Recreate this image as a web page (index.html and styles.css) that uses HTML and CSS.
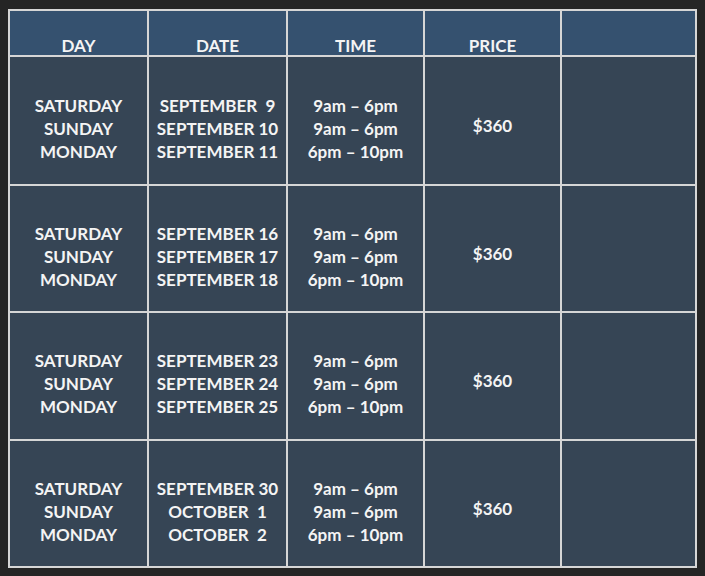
FILE: index.html
```html
<!DOCTYPE html>
<html>
<head>
<meta charset="utf-8">
<link rel="stylesheet" href="styles.css">
</head>
<body>
<div class="schedule">
  <div class="cell head">DAY</div>
  <div class="cell head">DATE</div>
  <div class="cell head">TIME</div>
  <div class="cell head">PRICE</div>
  <div class="cell head"></div>

  <div class="cell body"><span>SATURDAY</span><span>SUNDAY</span><span>MONDAY</span></div>
  <div class="cell body"><span>SEPTEMBER  9</span><span>SEPTEMBER 10</span><span>SEPTEMBER 11</span></div>
  <div class="cell body"><span>9am – 6pm</span><span>9am – 6pm</span><span>6pm – 10pm</span></div>
  <div class="cell body price"><span>$360</span></div>
  <div class="cell body"></div>

  <div class="cell body"><span>SATURDAY</span><span>SUNDAY</span><span>MONDAY</span></div>
  <div class="cell body"><span>SEPTEMBER 16</span><span>SEPTEMBER 17</span><span>SEPTEMBER 18</span></div>
  <div class="cell body"><span>9am – 6pm</span><span>9am – 6pm</span><span>6pm – 10pm</span></div>
  <div class="cell body price"><span>$360</span></div>
  <div class="cell body"></div>

  <div class="cell body"><span>SATURDAY</span><span>SUNDAY</span><span>MONDAY</span></div>
  <div class="cell body"><span>SEPTEMBER 23</span><span>SEPTEMBER 24</span><span>SEPTEMBER 25</span></div>
  <div class="cell body"><span>9am – 6pm</span><span>9am – 6pm</span><span>6pm – 10pm</span></div>
  <div class="cell body price"><span>$360</span></div>
  <div class="cell body"></div>

  <div class="cell body"><span>SATURDAY</span><span>SUNDAY</span><span>MONDAY</span></div>
  <div class="cell body"><span>SEPTEMBER 30</span><span>OCTOBER  1</span><span>OCTOBER  2</span></div>
  <div class="cell body"><span>9am – 6pm</span><span>9am – 6pm</span><span>6pm – 10pm</span></div>
  <div class="cell body price"><span>$360</span></div>
  <div class="cell body"></div>
</div>
</body>
</html>
```

FILE: styles.css
```css
html, body {
  margin: 0;
  padding: 0;
  background: #252525;
}
body {
  padding: 9px 0 0 8px;
}
.schedule {
  display: grid;
  grid-template-columns: 137px 137px 135px 135px 133px;
  grid-template-rows: 44px 127px 125px 126px 125px;
  gap: 2px;
  padding: 2px;
  width: max-content;
  background: #d6d6d6;
  font-family: Lato, "Open Sans", sans-serif;
  font-weight: 700;
  font-size: 17px;
  color: #f4f4f4;
}
.cell {
  display: flex;
  flex-direction: column;
  align-items: center;
  text-align: center;
  white-space: pre;
}
.head {
  background: #35516f;
  justify-content: flex-end;
  padding-bottom: 0;
  line-height: 19px;
}
.body {
  background: #364555;
  justify-content: center;
  padding-top: 15px;
  line-height: 23px;
}
.body.price {
  padding-top: 9px;
}
```
